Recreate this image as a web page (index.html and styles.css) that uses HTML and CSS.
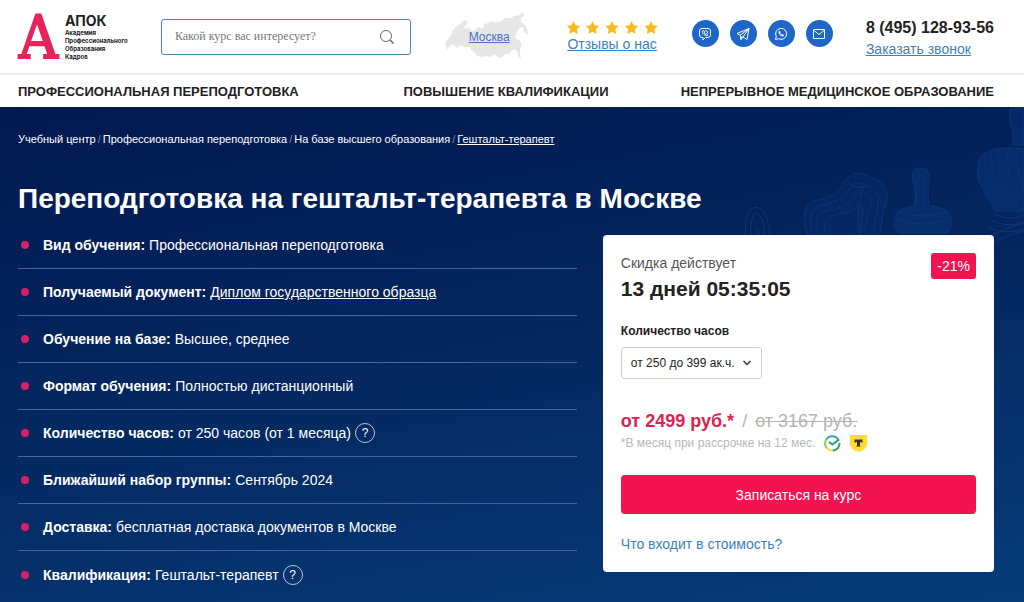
FILE: index.html
```
<!DOCTYPE html>
<html lang="ru">
<head>
  <meta charset="utf-8">
  <title>Переподготовка на гештальт-терапевта в Москве</title>
  <meta name="viewport" content="width=device-width, initial-scale=1">
  <link rel="stylesheet" href="styles.css">
</head>
<body>
  <header class="header">
    <a class="logo" href="/">
      <span class="logo-mark">А</span>
      <span class="logo-text">
        <b>АПОК</b>
        <small>Академия<br>Профессионального<br>Образования<br>Кадров</small>
      </span>
    </a>
    <form class="search" action="/search">
      <input type="text" name="q" placeholder="Какой курс вас интересует?" aria-label="Поиск курса">
      <button type="submit" aria-label="Найти">
        <svg width="16" height="16" viewBox="0 0 16 16" fill="none" stroke="#666"><circle cx="7" cy="7" r="5.5"/><path d="M11 11l3.500 3.500" stroke-width="1.5"/></svg>
      </button>
    </form>
    <a class="city" href="/city">
      <svg width="90" height="50" viewBox="0 0 90 50" fill="#e6e6e6"><path d="M0 31l4-4 3-4 1-4 4-4 5-4 3-3 4 2-1 3-3 1 1 3 4-1 3 3 4-1 2-3 5 2 1-5 5-1 2-2 4 2 7-2 3-3 6 0 3-2 5-1 4-4 1 5-3 2 0 4 4 3 2 4 1 6-4-3-1-5-4 1-3 6-1 4 4 2 3 5-2 4 0 5 1 5-3-3 0-3-3-4-4 2-2 3-4 0-4 4-4-1-2-3-5 3-4-1-3 1-6-1-3-4-3-2-1-3-6 0-3-2-4 3-3-3-4 0-3 5-1-4-1-4z"/></svg>
      <span>Москва</span>
    </a>
    <div class="reviews">
      <svg width="91" height="14" viewBox="0 0 91 14" fill="#fbb91c">
        <defs><path id="star" d="M6.500 0l2 4.300 4.700.6-3.400 3.300.9 4.800-4.200-2.300L2.300 13l.9-4.800L-.2 4.900l4.700-.6z"/></defs>
        <use href="#star"/><use href="#star" x="19"/><use href="#star" x="38.500"/><use href="#star" x="58"/><use href="#star" x="77.500"/>
      </svg>
      <a href="/reviews">Отзывы о нас</a>
    </div>
    <div class="social">
      <a href="#viber" aria-label="Viber">
        <svg width="14" height="14" viewBox="0 0 14 14"><path d="M4 1.500h6q2.500 0 2.500 2.500v4q0 2.500-2.500 2.500H7.500L5 13v-2.500H4Q1.500 10.500 1.500 8V4Q1.500 1.500 4 1.500z"/><path d="M4.500 4.200c-.8 1.500 2.400 5 4.600 4.600l.6-1.200-1.500-.9-.7.6-1.300-1.400.5-.8-.9-1.400zM7.300 3.500q2.500.2 2.500 2.700"/></svg>
      </a>
      <a href="#telegram" aria-label="Telegram">
        <svg width="14" height="14" viewBox="0 0 14 14"><path d="M1 6.500L13 1.500l-2 11-4-2.500-2 2.500-.8-4.300zM4.200 8.200L13 1.500 7 10M5 12.500L6 9.300"/></svg>
      </a>
      <a href="#whatsapp" aria-label="WhatsApp">
        <svg width="14" height="14" viewBox="0 0 14 14"><path d="M1.500 12.500l.8-3A5.500 5.500 0 1 1 4.500 11.700z"/><path d="M4.800 4.200C4 6 6.800 9.500 9.200 9.300l.7-1.300-1.500-.8-.7.700C6.900 7.500 6.400 6.900 6.100 6.300l.5-.7-.6-1.400z" fill="#fff" stroke-width=".3"/></svg>
      </a>
      <a href="#mail" aria-label="Почта">
        <svg width="14" height="14" viewBox="0 0 14 14"><path d="M1.500 2.500h11v9h-11zM1.500 3L7 7.500 12.500 3"/></svg>
      </a>
    </div>
    <div class="contacts">
      <b>8 (495) 128-93-56</b>
      <a href="#call">Заказать звонок</a>
    </div>
  </header>

  <nav class="nav">
    <a href="/retraining">Профессиональная переподготовка</a>
    <a href="/advanced">Повышение квалификации</a>
    <a href="/medical">Непрерывное медицинское образование</a>
  </nav>

  <main class="hero">
    <svg class="hero-pattern" width="304" height="240" viewBox="0 0 304 240" fill="none" stroke="#1450a0" aria-hidden="true">
      <g fill="#0f4a9c" fill-opacity=".6">
        <path d="M291 0h13v38h-11V24q-6-12-2-24zM260 50q10-12 44-8v62h-28q-10-14-18-32-2-12 2-22z"/>
        <path d="M193 74a9 9 0 1 1 16 0q-2 8 0 24 22 4 22 12 2 14-6 16h-46q-8-6-5-15 3-10 20-12 3-16-1-25z"/>
      </g>
      <path d="M264 50q4 36 24 52M271 46q0 36 20 54M279 43q-2 34 18 54M288 41q-3 34 14 50M297 40q-3 20 7 38" stroke-dasharray="3 2"/>
      <path d="M276 108q16 6 28 0M272 114q18 7 32 1M268 121q18 7 36 1M266 132q20-12 38-16M270 138q20-12 34-14M180 104q20 10 48 0M178 112q24 10 50 0M196 72v28M204 72v28"/>
      <path fill="#0f4a9c" fill-opacity=".3" d="M88 128q-10-28 6-34 24-4 31-20 10-15 28-2 18 5 13 25-4 10-6 31"/>
      <path d="M93 128q-7-22 4-28 26-5 34-20 8-8 18 0 12 6 9 18l-5 30M99 128q-7-18 3-23 28-5 35-18 8-3 12 3 4 8-1 16l-4 22M106 128q-4-13 3-18l24-7q10-8 10 3l-3 22M128 76q10 8 22 2M143 82q-8 22-2 46"/>
      <path d="M26 128q-3-26 10-28 12 1 14 28M31 128q-1-20 5-22 7 1 9 22M36 128q0-14 4 0"/>
    </svg>

    <ul class="breadcrumbs">
      <li><a href="/">Учебный центр</a></li>
      <li><a href="/retraining">Профессиональная переподготовка</a></li>
      <li><a href="/higher">На базе высшего образования</a></li>
      <li><a class="current" href="#">Гештальт-терапевт</a></li>
    </ul>
    <h1>Переподготовка на гештальт-терапевта в Москве</h1>

    <div class="content">
      <ul class="features">
        <li><b>Вид обучения:</b> Профессиональная переподготовка</li>
        <li><b>Получаемый документ:</b> <a href="#diploma">Диплом государственного образца</a></li>
        <li><b>Обучение на базе:</b> Высшее, среднее</li>
        <li><b>Формат обучения:</b> Полностью дистанционный</li>
        <li><b>Количество часов:</b> от 250 часов (от 1 месяца) <button class="help" type="button">?</button></li>
        <li><b>Ближайший набор группы:</b> Сентябрь 2024</li>
        <li><b>Доставка:</b> бесплатная доставка документов в Москве</li>
        <li><b>Квалификация:</b> Гештальт-терапевт <button class="help" type="button">?</button></li>
      </ul>

      <section class="card">
        <span class="badge">-21%</span>
        <p class="card-note">Скидка действует</p>
        <p class="timer">13 дней 05:35:05</p>
        <label for="hours">Количество часов</label>
        <div class="select">
          <select id="hours">
            <option>от 250 до 399 ак.ч.</option>
          </select>
          <svg width="10" height="6" viewBox="0 0 10 6" fill="none" stroke="#333" stroke-width="1.500"><path d="M1.500 1L5 4.500 8.500 1"/></svg>
        </div>
        <div class="price">
          <b>от 2499 руб.*</b>
          <span>/</span>
          <s>от 3167 руб.</s>
        </div>
        <div class="credit">
          <span>*В месяц при рассрочке на 12 мес.</span>
          <svg width="17" height="17" viewBox="0 0 17 17" fill="none" stroke-width="2">
            <path d="M14.500 5A7 7 0 0 0 2 5" stroke="#35a5dc"/>
            <path d="M2 5a7 7 0 0 0 1 8.200" stroke="#8fd14f"/>
            <path d="M3 13.200a7 7 0 0 0 6 2.300" stroke="#e9dc3c"/>
            <path d="M9 15.500A7 7 0 0 0 15.500 8" stroke="#2ba36b"/>
            <path d="M5 7l3.500 2.500L15 4.500" stroke="#2ba36b"/>
          </svg>
          <svg width="17" height="17" viewBox="0 0 17 17"><path d="M0 0h17v9q0 5-8.500 8Q0 14 0 9z" fill="#fddd2d"/><path d="M4.500 4.500h8v3H11l-1-1v4l1 1H6l1-1v-4l-1 1H4.500z" fill="#333"/></svg>
        </div>
        <button class="enroll" type="button">Записаться на курс</button>
        <a class="included" href="#price">Что входит в стоимость?</a>
      </section>
    </div>
  </main>
</body>
</html>
```

FILE: styles.css
```
* {
  box-sizing: border-box;
}

body {
  margin: 0;
  min-height: 100vh;
  display: flex;
  flex-direction: column;
  font-family: "Liberation Sans", Arial, sans-serif;
  font-size: 14px;
  color: #222;
  background: #fff;
}

a {
  color: #3c7fc0;
}

ul,
h1,
p {
  margin: 0;
  padding: 0;
  list-style: none;
}

.header {
  display: flex;
  justify-content: space-between;
  align-items: center;
  height: 75px;
  padding: 0 30px 0 18px;
  border-bottom: 2px solid #eee;
}

.logo {
  display: flex;
  align-items: center;
  gap: 6px;
  color: #222;
  text-decoration: none;
}

.logo-mark {
  font-family: "DejaVu Serif Condensed", "DejaVu Serif", serif;
  font-size: 60px;
  line-height: 48px;
  color: #e8235c;
  -webkit-text-stroke: 2px #e8235c;
}

.logo-text b,
.logo-text small {
  display: block;
  font-family: Inter, sans-serif;
}

.logo-text b {
  font-size: 14px;
  line-height: 16px;
}

.logo-text small {
  font-size: 6px;
  line-height: 8px;
  font-weight: bold;
}

.search {
  display: flex;
  align-items: center;
  width: 250px;
  height: 36px;
  border: 1px solid #4a8ab0;
  border-radius: 3px;
}

.search input {
  flex: 1;
  min-width: 0;
  padding: 0 13px;
  border: 0;
  outline: 0;
  background: none;
  font-family: "Liberation Serif", serif;
  font-size: 12px;
}

.search input::placeholder {
  color: #777;
}

.search button {
  display: flex;
  padding: 0 15px;
  border: 0;
  background: none;
}

.city {
  position: relative;
  display: flex;
  align-items: center;
  justify-content: center;
  font-size: 12px;
  color: #4a72c0;
}

.city span {
  position: absolute;
  text-decoration: underline;
}

.reviews,
.contacts {
  display: flex;
  flex-direction: column;
}

.reviews a,
.contacts a {
  font-size: 14px;
  line-height: 18px;
}

.contacts b {
  font-size: 16px;
  line-height: 24px;
}

.social {
  display: flex;
  gap: 11px;
  margin-bottom: 6px;
}

.social a {
  display: flex;
  align-items: center;
  justify-content: center;
  width: 27px;
  height: 27px;
  border-radius: 50%;
  background: #1e66c8;
}

.social svg {
  fill: none;
  stroke: #fff;
}

.nav {
  display: grid;
  grid-template-columns: 1fr auto 1fr;
  align-items: center;
  height: 32px;
  padding: 0 30px 0 18px;
}

.nav a {
  font-size: 13px;
  font-weight: bold;
  color: #222;
  text-decoration: none;
  text-transform: uppercase;
}

.nav a:last-child {
  text-align: right;
}

.hero {
  position: relative;
  flex: 1;
  padding: 24px 30px 4px 18px;
  color: #fff;
  background: linear-gradient(170deg, #031850, #052860 50%, #063c7a);
}

.hero-pattern {
  position: absolute;
  top: 0;
  right: 0;
  opacity: .4;
}

.breadcrumbs {
  display: flex;
  font-size: 11px;
  line-height: 16px;
}

.breadcrumbs li + li::before {
  content: "/";
  padding: 0 2px;
  color: #7285ac;
}

.breadcrumbs a {
  color: #fff;
  text-decoration: none;
}

.breadcrumbs .current {
  text-decoration: underline;
}

h1 {
  margin-top: 34px;
  font-size: 28px;
  line-height: 36px;
}

.content {
  position: relative;
  display: grid;
  grid-template-columns: 10fr 7fr;
  gap: 26px;
  align-items: start;
  margin-top: 5px;
}

.features li {
  display: flex;
  align-items: center;
  gap: 4px;
  height: 47px;
  border-bottom: 1px solid #46659a;
}

.features li:last-child {
  border-bottom: 0;
}

.features li::before {
  content: "";
  width: 8px;
  height: 8px;
  margin: 0 10px 0 3px;
  border-radius: 50%;
  background: #d81f68;
}

.features a {
  color: #fff;
}

.help {
  width: 20px;
  height: 20px;
  padding: 0;
  border: 1px solid #b4c4dc;
  border-radius: 50%;
  background: none;
  color: #fff;
  font-family: inherit;
  font-size: 12px;
  line-height: 18px;
}

.card {
  position: relative;
  margin-top: 13px;
  padding: 18px;
  border-radius: 4px;
  background: #fff;
  color: #222;
}

.badge {
  position: absolute;
  top: 18px;
  right: 18px;
  padding: 0 6px;
  border-radius: 3px;
  background: #f31350;
  color: #fff;
  font-size: 14px;
  line-height: 26px;
}

.card-note {
  line-height: 20px;
  color: #555;
}

.timer {
  font-size: 21px;
  line-height: 32px;
  font-weight: bold;
}

.card label {
  display: block;
  margin-top: 18px;
  font-size: 12px;
  line-height: 16px;
  font-weight: bold;
}

.select {
  position: relative;
  width: 141px;
  margin-top: 8px;
}

.select select {
  appearance: none;
  width: 100%;
  height: 32px;
  padding: 0 9px;
  border: 1px solid #ccc;
  border-radius: 3px;
  background: #fff;
  color: #222;
  font-family: inherit;
  font-size: 12px;
}

.select svg {
  position: absolute;
  top: 13px;
  right: 10px;
}

.price {
  display: flex;
  gap: 8px;
  margin-top: 30px;
  font-size: 18px;
  line-height: 24px;
  color: #b4b4b4;
}

.price b {
  color: #e0204f;
}

.credit {
  display: flex;
  align-items: center;
  gap: 9px;
  font-size: 12px;
  line-height: 20px;
  color: #b8b8b8;
}

.enroll {
  display: block;
  width: 100%;
  height: 39px;
  margin-top: 22px;
  border: 0;
  border-radius: 4px;
  background: #f31350;
  color: #fff;
  font-family: inherit;
  font-size: 14px;
}

.included {
  display: block;
  margin-top: 20px;
  line-height: 20px;
  text-decoration: none;
}
```
